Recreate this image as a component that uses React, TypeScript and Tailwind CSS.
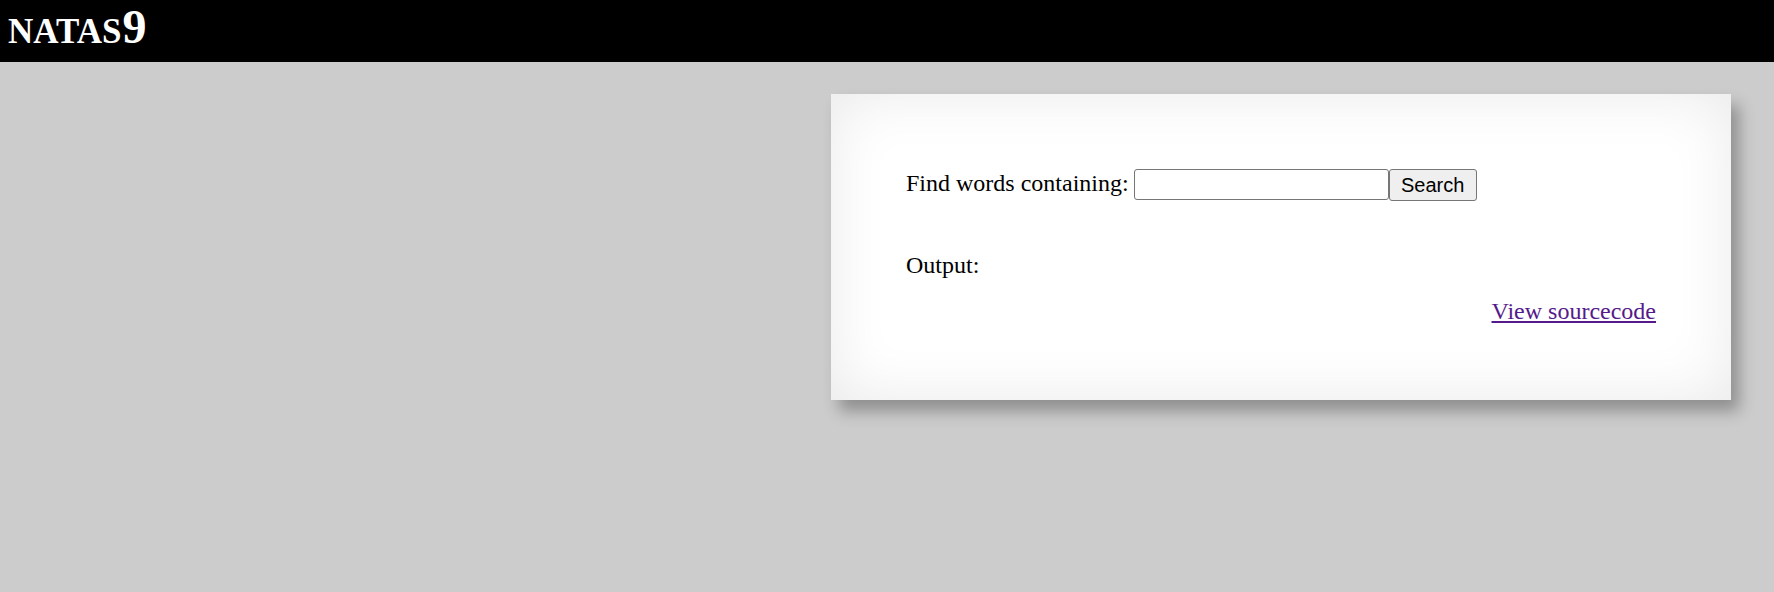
import React from "react";

export default function App() {
  return (
    <div className="min-h-[592px] bg-[#cccccc] font-['Liberation_Serif','Times_New_Roman',serif] text-black">
      <h1 className="h-[62px] bg-black pl-[8px] text-[48px] font-bold leading-[53px] text-white">
        <span className="text-[35px]">NATAS</span>
        <span className="ml-[1px]">9</span>
      </h1>
      <div className="ml-[831px] mt-[32px] w-[900px] bg-white p-[75px] shadow-[inset_0_0_60px_rgba(0,0,0,0.09),8px_11px_15px_rgba(0,0,0,0.3)]">
        <form className="flex items-start" onSubmit={(e) => e.preventDefault()}>
          <span className="text-[24px] leading-[28px]">Find words containing:</span>
          <input
            name="needle"
            className="ml-[5px] h-[31px] w-[255px] rounded-[3px] border border-[#767676] bg-white px-[3px] font-['Liberation_Sans',Arial,sans-serif] text-[20px] outline-none"
          />
          <button
            type="submit"
            className="h-[32px] w-[88px] rounded-[3px] border border-[#767676] bg-[#efefef] font-['Liberation_Sans',Arial,sans-serif] text-[20px] leading-[30px] text-black"
          >
            Search
          </button>
        </form>
        <div className="mt-[50px] text-[24px] leading-[28px]">Output:</div>
        <div className="mt-[18px] flex justify-end text-[24px] leading-[28px]">
          <a href="#" className="text-[#551a8b] underline">
            View sourcecode
          </a>
        </div>
      </div>
    </div>
  );
}
